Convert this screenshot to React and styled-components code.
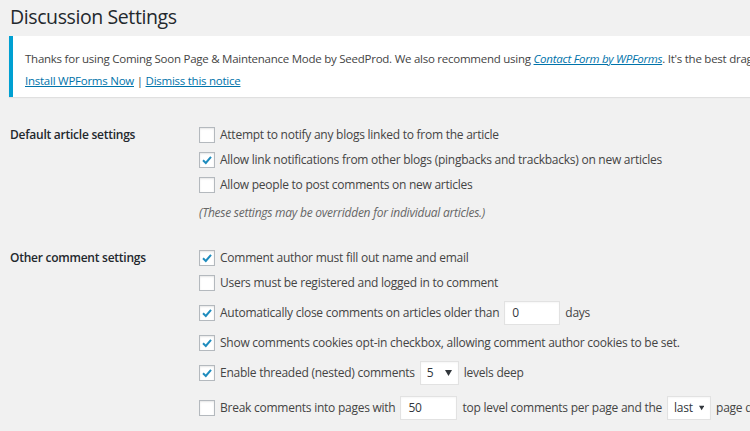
import React from 'react';
import styled, { createGlobalStyle } from 'styled-components';

const GlobalStyle = createGlobalStyle`
  html, body {
    margin: 0;
    padding: 0;
    background: #f1f1f1;
    overflow: hidden;
  }
  body {
    font-family: "Open Sans", "Noto Sans", sans-serif;
    font-size: 12px;
    letter-spacing: -0.25px;
    color: #444;
  }
`;

const Page = styled.div`
  padding: 0 0 0 9px;
  width: 750px;
  box-sizing: border-box;
  overflow: hidden;
`;

const Title = styled.h1`
  margin: 0;
  padding: 3px 0 0 1px;
  height: 36px;
  box-sizing: border-box;
  font-size: 19.5px;
  letter-spacing: -0.4px;
  line-height: 28px;
  font-weight: 400;
  color: #23282d;
`;

const Notice = styled.div`
  background: #fff;
  border-left: 4px solid #00a0d2;
  box-shadow: 0 1px 1px rgba(0, 0, 0, 0.07);
  padding: 12px 0 5px 12px;
  margin-right: -60px;
  font-size: 11.5px;
  white-space: nowrap;
  overflow: hidden;
`;

const NoticeLine = styled.p`
  margin: 0;
  line-height: 22px;
`;

const Link = styled.a`
  color: #0073aa;
  text-decoration: underline;
  font-style: ${p => (p.$italic ? 'italic' : 'normal')};
`;

const Section = styled.div`
  display: grid;
  grid-template-columns: 190px 1fr;
  margin-top: ${p => p.$top}px;
`;

const Label = styled.div`
  font-weight: 600;
  color: #23282d;
  line-height: 25px;
  padding-left: 1px;
`;

const Options = styled.div`
  display: flex;
  flex-direction: column;
  white-space: nowrap;
`;

const Row = styled.label`
  display: flex;
  align-items: center;
  gap: 5px;
  height: ${p => (p.$tall ? 35 : 25)}px;
`;

const Note = styled.p`
  margin: 3px 0 0;
  line-height: 25px;
  font-style: italic;
  color: #666;
`;

const Box = styled.span`
  flex: none;
  width: 14px;
  height: 14px;
  border: 1px solid #b4b9be;
  background: #fff;
  box-shadow: inset 0 1px 2px rgba(0, 0, 0, 0.1);
  display: flex;
  align-items: center;
  justify-content: center;
`;

const TextInput = styled.span`
  flex: none;
  display: inline-flex;
  align-items: center;
  box-sizing: border-box;
  width: ${p => p.$w}px;
  height: 24px;
  padding: 0 7px;
  background: #fff;
  border: 1px solid #e2e2e2;
  box-shadow: inset 0 1px 2px rgba(0, 0, 0, 0.04);
  color: #32373c;
`;

const Select = styled(TextInput)`
  justify-content: space-between;
  gap: 6px;
  padding: 0 6px 0 6px;
`;

function Checkbox({ checked }) {
  return (
    <Box>
      {checked && (
        <svg width="12" height="12" viewBox="0 0 12 12">
          <path d="M2 6.3 L4.8 9 L10 2.8" fill="none" stroke="#1e8cbe" strokeWidth="2" />
        </svg>
      )}
    </Box>
  );
}

function Dropdown({ value, w }) {
  return (
    <Select $w={w}>
      <span>{value}</span>
      <svg width="7" height="6" viewBox="0 0 7 6">
        <path d="M0 0 H7 L3.5 6 Z" fill="#32373c" />
      </svg>
    </Select>
  );
}

export default function App() {
  return (
    <Page>
      <GlobalStyle />
      <Title>Discussion Settings</Title>
      <Notice>
        <NoticeLine>
          Thanks for using Coming Soon Page &amp; Maintenance Mode by SeedProd. We also recommend using{' '}
          <Link $italic>Contact Form by WPForms</Link>. It's the best drag &amp; drop form builder for WordPress.
        </NoticeLine>
        <NoticeLine>
          <Link>Install WPForms Now</Link> | <Link>Dismiss this notice</Link>
        </NoticeLine>
      </Notice>

      <Section $top={25}>
        <Label>Default article settings</Label>
        <Options>
          <Row><Checkbox />Attempt to notify any blogs linked to from the article</Row>
          <Row><Checkbox checked />Allow link notifications from other blogs (pingbacks and trackbacks) on new articles</Row>
          <Row><Checkbox />Allow people to post comments on new articles</Row>
          <Note>(These settings may be overridden for individual articles.)</Note>
        </Options>
      </Section>

      <Section $top={20}>
        <Label>Other comment settings</Label>
        <Options>
          <Row><Checkbox checked />Comment author must fill out name and email</Row>
          <Row><Checkbox />Users must be registered and logged in to comment</Row>
          <Row $tall><Checkbox checked />Automatically close comments on articles older than <TextInput $w={56}>0</TextInput> days</Row>
          <Row><Checkbox checked />Show comments cookies opt-in checkbox, allowing comment author cookies to be set.</Row>
          <Row $tall><Checkbox checked />Enable threaded (nested) comments <Dropdown value="5" w={39} /> levels deep</Row>
          <Row $tall><Checkbox />Break comments into pages with <TextInput $w={57}>50</TextInput> top level comments per page and the <Dropdown value="last" w={44} /> page displayed by default</Row>
          <Row $tall>Comments should be displayed with the <Dropdown value="older" w={60} /> comments at the top of each page</Row>
        </Options>
      </Section>
    </Page>
  );
}
